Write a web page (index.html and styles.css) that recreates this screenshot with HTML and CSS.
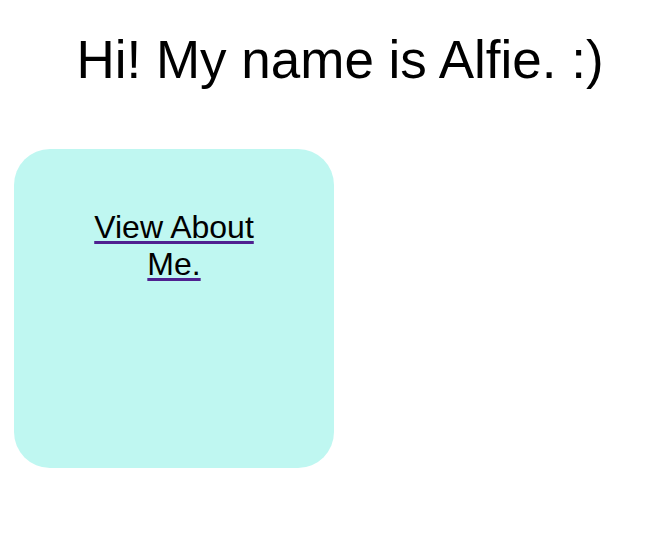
FILE: index.html
```html
<!DOCTYPE html>
<html lang="en">
<head>
<meta charset="utf-8">
<title>Alfie</title>
<link rel="stylesheet" href="styles.css">
</head>
<body>
<h1 class="title">Hi! My name is Alfie. :)</h1>
<div class="card">
  <a class="card-link" href="#about">View About Me.</a>
</div>
</body>
</html>
```
FILE: styles.css
```css
html, body {
  margin: 0;
  padding: 0;
  background: #ffffff;
}
body {
  font-family: "Liberation Sans", Arial, Helvetica, sans-serif;
  color: #000000;
}
.title {
  margin: 0;
  padding: 29px 0 0 18px;
  font-size: 53px;
  font-weight: normal;
  line-height: normal;
  text-align: center;
}
.card {
  margin: 59px 0 0 14px;
  width: 320px;
  height: 319px;
  box-sizing: border-box;
  padding: 60px 60px 0;
  background: #bff7f1;
  border-radius: 36px;
  text-align: center;
}
.card-link {
  font-size: 32px;
  line-height: normal;
  color: #000000;
  text-decoration: underline;
  text-decoration-color: #4f2190;
  text-decoration-thickness: 3px;
  text-underline-offset: 3px;
}
```
